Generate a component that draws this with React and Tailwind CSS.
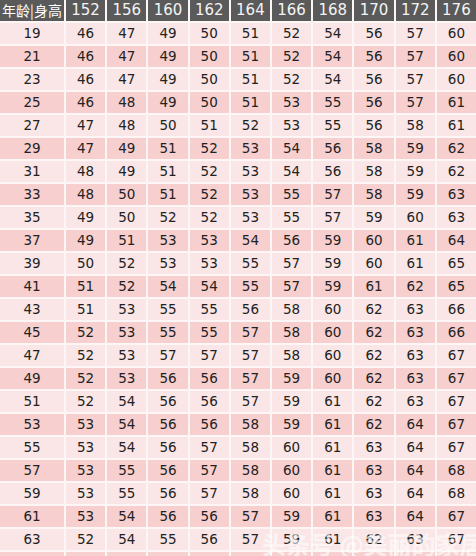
import React from 'react';

const heights = [152, 156, 160, 162, 164, 166, 168, 170, 172, 176];

const rows = [
  [19, 46, 47, 49, 50, 51, 52, 54, 56, 57, 60],
  [21, 46, 47, 49, 50, 51, 52, 54, 56, 57, 60],
  [23, 46, 47, 49, 50, 51, 52, 54, 56, 57, 60],
  [25, 46, 48, 49, 50, 51, 53, 55, 56, 57, 61],
  [27, 47, 48, 50, 51, 52, 53, 55, 56, 58, 61],
  [29, 47, 49, 51, 52, 53, 54, 56, 58, 59, 62],
  [31, 48, 49, 51, 52, 53, 54, 56, 58, 59, 62],
  [33, 48, 50, 51, 52, 53, 55, 57, 58, 59, 63],
  [35, 49, 50, 52, 52, 53, 55, 57, 59, 60, 63],
  [37, 49, 51, 53, 53, 54, 56, 59, 60, 61, 64],
  [39, 50, 52, 53, 53, 55, 57, 59, 60, 61, 65],
  [41, 51, 52, 54, 54, 55, 57, 59, 61, 62, 65],
  [43, 51, 53, 55, 55, 56, 58, 60, 62, 63, 66],
  [45, 52, 53, 55, 55, 57, 58, 60, 62, 63, 66],
  [47, 52, 53, 57, 57, 57, 58, 60, 62, 63, 67],
  [49, 52, 53, 56, 56, 57, 59, 60, 62, 63, 67],
  [51, 52, 54, 56, 56, 57, 59, 61, 62, 63, 67],
  [53, 53, 54, 56, 56, 58, 59, 61, 62, 64, 67],
  [55, 53, 54, 56, 57, 58, 60, 61, 63, 64, 67],
  [57, 53, 55, 56, 57, 58, 60, 61, 63, 64, 68],
  [59, 53, 55, 56, 57, 58, 60, 61, 63, 64, 68],
  [61, 53, 54, 56, 56, 57, 59, 61, 63, 64, 67],
  [63, 52, 54, 55, 56, 57, 59, 61, 62, 63, 67],
];

const App = () => {
  return (
    <div className="relative w-[476px] h-[556px] overflow-hidden bg-[#fdf6f6]">
      <div className="grid grid-cols-[64px_repeat(10,1fr)] gap-[2px] auto-rows-[21px] font-['DejaVu_Sans','Noto_Sans_CJK_SC',sans-serif]">
        <div className="bg-[#5a5a5a] text-white text-[14px] flex items-center justify-center whitespace-nowrap font-['Noto_Sans_CJK_SC',sans-serif]">
          年龄|身高
        </div>
        {heights.map((h) => (
          <div key={h} className="bg-[#5a5a5a] text-[#f4f4f4] text-[15px] flex items-center justify-center">
            {h}
          </div>
        ))}
        {rows.map((r, i) =>
          r.map((v, j) => (
            <div
              key={i + '-' + j}
              className={
                'flex items-center justify-center text-[13.5px] text-[#222] ' +
                (i % 2 === 0 ? 'bg-[#fae6e6]' : 'bg-[#f8cfcf]')
              }
            >
              {v}
            </div>
          ))
        )}
        {/* partly hidden next row at the bottom edge */}
        {Array.from({ length: 11 }).map((_, j) => (
          <div key={'tail-' + j} className="bg-[#f8cfcf]" />
        ))}
      </div>
      <div className="absolute left-[262px] top-[526px] whitespace-nowrap text-[24px] font-bold text-white/60 font-['Noto_Sans_CJK_SC',sans-serif]">
        头条号 @美丽的家居
      </div>
    </div>
  );
};

export default App;
